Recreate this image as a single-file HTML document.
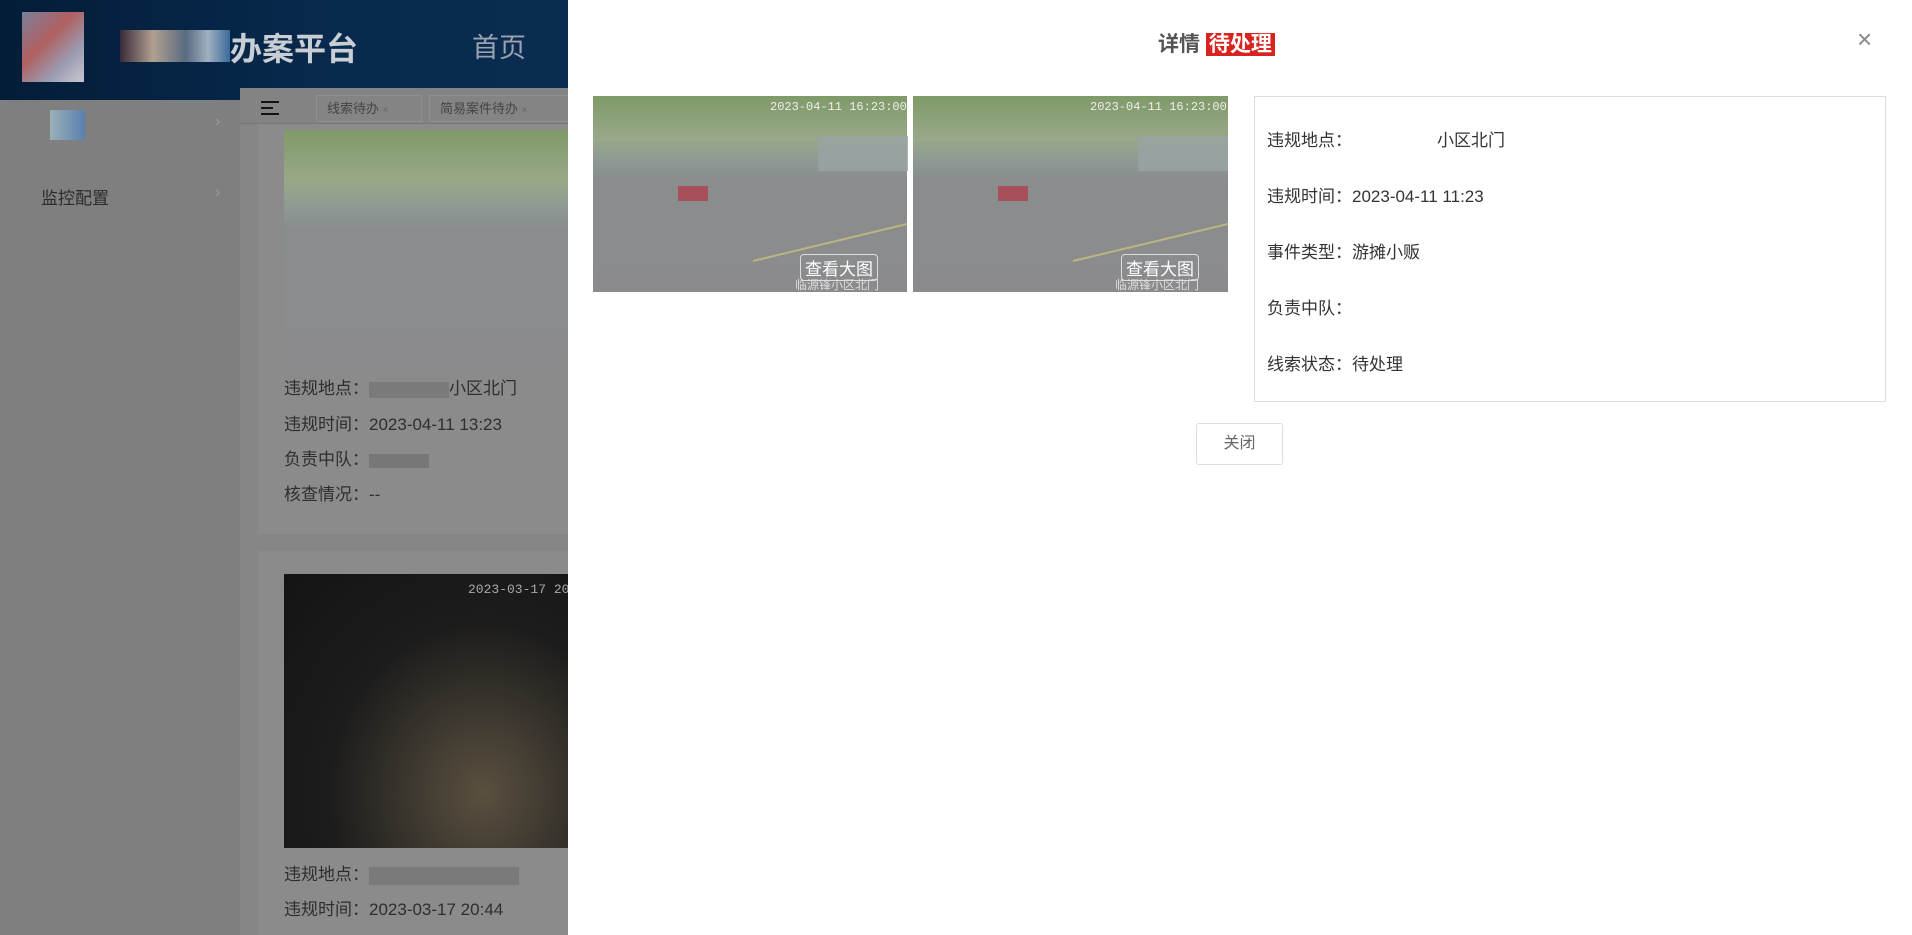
<!DOCTYPE html>
<html><head><meta charset="utf-8"><style>
*{margin:0;padding:0;box-sizing:border-box}
body{width:1912px;height:935px;overflow:hidden;position:relative;font-family:"Liberation Sans","Noto Sans CJK SC",sans-serif;background:#868686}
.abs{position:absolute}
.hdr{left:0;top:0;width:568px;height:100px;background:linear-gradient(90deg,#031d38,#082a4e 60%,#0a2c50)}
.side{left:0;top:100px;width:240px;height:835px;background:#7f7f7f}
.main{left:240px;top:88px;width:328px;height:847px;background:#868686}
.tabs{left:240px;top:88px;width:328px;height:36px;background:#838383;border-bottom:1px solid #777}
.tab{top:95px;height:27px;border:1px solid #8f8f8f;color:#444;font-size:13px;line-height:25px;padding-left:10px;background:#848484}
.card{left:258px;width:310px;background:#8b8b8b}
.lt{color:#2e2e2e;font-size:17px;left:284px}
.photo{background:linear-gradient(180deg,#7f9a68 0%,#98a888 22%,#8e9894 34%,#8a8d8d 42%,#8b8b8d 100%)}
.drawer{left:568px;top:0;width:1344px;height:935px;background:#fff}
.row{left:1267px;font-size:17px;color:#333}
</style></head><body>
<div class="abs hdr"></div>
<div class="abs" style="left:22px;top:12px;width:62px;height:70px;background:linear-gradient(135deg,#7a7f9a,#b06060 40%,#9a9ab0 70%,#c8c8d0)"></div>
<div class="abs" style="left:120px;top:30px;width:110px;height:32px;background:linear-gradient(90deg,#3a2a3a,#b0a090 30%,#5a6a80 60%,#a0b0c0 80%,#3a6a9a)"></div>
<div class="abs" style="left:230px;top:24px;font-size:32px;font-weight:bold;color:#c9cdd4">办案平台</div>
<div class="abs" style="left:472px;top:26px;font-size:27px;color:#9aa3af">首页</div>
<div class="abs side"></div>
<div class="abs" style="left:50px;top:110px;width:35px;height:30px;background:linear-gradient(90deg,#9ab0b8,#5a80b0)"></div>
<div class="abs" style="left:215px;top:113px;color:#999;font-size:16px">›</div>
<div class="abs" style="left:41px;top:184px;color:#2c2c2c;font-size:17px">监控配置</div>
<div class="abs" style="left:215px;top:184px;color:#999;font-size:16px">›</div>
<div class="abs main"></div>
<div class="abs tabs"></div>
<div class="abs" style="left:261px;top:101px;width:18px;height:14px;border-top:2px solid #111;border-bottom:2px solid #111"><div style="margin-top:4px;width:12px;border-top:2px solid #111"></div></div>
<div class="abs tab" style="left:316px;width:106px">线索待办 <span style="font-size:10px;color:#666">×</span></div>
<div class="abs tab" style="left:429px;width:140px">简易案件待办 <span style="font-size:10px;color:#666">×</span></div>
<div class="abs card" style="top:124px;height:410px"></div>
<div class="abs photo" style="left:284px;top:130px;width:284px;height:233px"></div>
<div class="abs lt" style="top:374px">违规地点：<span style="display:inline-block;width:80px;height:16px;background:#7a7a7a;vertical-align:middle"></span>小区北门</div>
<div class="abs lt" style="top:410px">违规时间：2023-04-11 13:23</div>
<div class="abs lt" style="top:445px">负责中队：<span style="display:inline-block;width:60px;height:14px;background:#777;vertical-align:middle"></span></div>
<div class="abs lt" style="top:480px">核查情况：--</div>
<div class="abs card" style="top:551px;height:384px"></div>
<div class="abs" style="left:284px;top:574px;width:284px;height:274px;background:radial-gradient(ellipse at 70% 80%,#5a5040,#1c1c1c 55%,#141414)"></div>
<div class="abs" style="left:468px;top:582px;color:#aaa;font-size:13px;font-family:'Liberation Mono',monospace">2023-03-17 20</div>
<div class="abs lt" style="top:860px">违规地点：<span style="display:inline-block;width:150px;height:18px;background:#7a7a7a;vertical-align:middle"></span></div>
<div class="abs lt" style="top:895px">违规时间：2023-03-17 20:44</div>

<div class="abs drawer"></div>
<div class="abs" style="left:1158px;top:28px;font-size:21px;font-weight:bold;color:#555">详情 <span style="background:#d8231f;color:#fff;padding:0 3px">待处理</span></div>
<div class="abs" style="left:1857px;top:24px;font-size:26px;color:#888;font-weight:300">×</div>
<div class="abs photo" style="left:593px;top:96px;width:314px;height:196px"></div>
<div class="abs photo" style="left:913px;top:96px;width:315px;height:196px"></div>
<svg class="abs" style="left:593px;top:96px" width="635" height="196">
<g opacity="0.8"><line x1="160" y1="165" x2="314" y2="128" stroke="#c8c080" stroke-width="2"/><line x1="480" y1="165" x2="635" y2="128" stroke="#c8c080" stroke-width="2"/>
<rect x="225" y="40" width="90" height="35" fill="#9aa4a4"/><rect x="545" y="40" width="90" height="35" fill="#9aa4a4"/>
<rect x="85" y="90" width="30" height="15" fill="#b04050"/><rect x="405" y="90" width="30" height="15" fill="#b04050"/></g></svg>
<div class="abs" style="left:770px;top:100px;color:#eee;font-size:12px;font-family:'Liberation Mono',monospace">2023-04-11 16:23:00</div>
<div class="abs" style="left:1090px;top:100px;color:#eee;font-size:12px;font-family:'Liberation Mono',monospace">2023-04-11 16:23:00</div>
<div class="abs" style="left:800px;top:254px;border:1px solid #ddd;border-radius:4px;color:#fff;font-size:17px;padding:0 4px">查看大图</div>
<div class="abs" style="left:1121px;top:254px;border:1px solid #ddd;border-radius:4px;color:#fff;font-size:17px;padding:0 4px">查看大图</div>
<div class="abs" style="left:795px;top:276px;color:#ddd;font-size:12px">临源锋小区北门</div>
<div class="abs" style="left:1115px;top:276px;color:#ddd;font-size:12px">临源锋小区北门</div>
<div class="abs" style="left:1254px;top:96px;width:632px;height:306px;border:1px solid #ddd"></div>
<div class="abs row" style="top:126px">违规地点：<span style="margin-left:85px">小区北门</span></div>
<div class="abs row" style="top:182px">违规时间：2023-04-11 11:23</div>
<div class="abs row" style="top:238px">事件类型：游摊小贩</div>
<div class="abs row" style="top:294px">负责中队：</div>
<div class="abs row" style="top:350px">线索状态：待处理</div>
<div class="abs" style="left:1196px;top:423px;width:87px;height:42px;border:1px solid #ddd;border-radius:3px;text-align:center;line-height:40px;font-size:16px;color:#666">关闭</div>
</body></html>
